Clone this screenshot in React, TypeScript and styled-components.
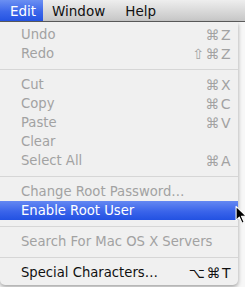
import React from "react";
import styled, { createGlobalStyle } from "styled-components";

const GlobalStyle = createGlobalStyle`
  html, body {
    margin: 0;
    padding: 0;
    background: #f7f7f7;
  }
  body {
    font-family: "DejaVu Sans", "Liberation Sans", sans-serif;
    width: 245px;
    height: 287px;
    overflow: hidden;
  }
`;

const Screen = styled.div`
  position: relative;
  width: 245px;
  height: 287px;
`;

const MenuBar = styled.div`
  display: flex;
  align-items: stretch;
  height: 21px;
  background: linear-gradient(#eeeeee, #d6d6d6 60%, #c6c6c6);
  border-bottom: 1px solid #5c5c5c;
`;

const BarItem = styled.div<{ $active?: boolean }>`
  display: flex;
  align-items: center;
  padding: ${(p) => (p.$active ? "0 0 0 10px" : "0")};
  width: ${(p) => (p.$active ? "43px" : "auto")};
  box-sizing: border-box;
  margin-right: ${(p) => (p.$active ? "9px" : "20px")};
  font-size: 13.5px;
  color: ${(p) => (p.$active ? "#ffffff" : "#111111")};
  background: ${(p) =>
    p.$active ? "linear-gradient(#6b8ff2, #3c67ea 55%, #2453e2)" : "none"};
`;

const Menu = styled.div`
  width: 238px;
  padding: 3px 0 3px;
  background: #f0f0f0;
  border-radius: 0 0 5px 5px;
  box-shadow: 0 2px 4px rgba(0, 0, 0, 0.35);
`;

const Item = styled.div<{ $disabled?: boolean; $selected?: boolean }>`
  display: flex;
  align-items: center;
  justify-content: space-between;
  height: 19px;
  padding: 0 6px 0 21px;
  font-size: 13.2px;
  color: ${(p) => (p.$selected ? "#ffffff" : p.$disabled ? "#a2a2a2" : "#111111")};
  background: ${(p) =>
    p.$selected ? "linear-gradient(#6488f2, #3a64ea 55%, #2251e2)" : "none"};
`;

const Shortcut = styled.span`
  font-size: 14px;
  letter-spacing: 1.5px;
`;

const Separator = styled.div`
  height: 12px;
  display: flex;
  align-items: center;
  &::after {
    content: "";
    flex: 1;
    height: 1px;
    background: #d6d6d6;
  }
`;

const Cursor = styled.svg`
  position: absolute;
  left: 235px;
  top: 205px;
`;

type Entry =
  | { sep: true }
  | { label: string; key?: string; disabled?: boolean; selected?: boolean };

const entries: Entry[] = [
  { label: "Undo", key: "⌘Z", disabled: true },
  { label: "Redo", key: "⇧⌘Z", disabled: true },
  { sep: true },
  { label: "Cut", key: "⌘X", disabled: true },
  { label: "Copy", key: "⌘C", disabled: true },
  { label: "Paste", key: "⌘V", disabled: true },
  { label: "Clear", disabled: true },
  { label: "Select All", key: "⌘A", disabled: true },
  { sep: true },
  { label: "Change Root Password…", disabled: true },
  { label: "Enable Root User", selected: true },
  { sep: true },
  { label: "Search For Mac OS X Servers", disabled: true },
  { sep: true },
  { label: "Special Characters…", key: "⌥⌘T" },
];

export default function App() {
  return (
    <Screen>
      <GlobalStyle />
      <MenuBar>
        <BarItem $active>Edit</BarItem>
        <BarItem>Window</BarItem>
        <BarItem>Help</BarItem>
      </MenuBar>
      <Menu>
        {entries.map((e, i) =>
          "sep" in e ? (
            <Separator key={i} />
          ) : (
            <Item key={i} $disabled={e.disabled} $selected={e.selected}>
              <span>{e.label}</span>
              {e.key && <Shortcut>{e.key}</Shortcut>}
            </Item>
          )
        )}
      </Menu>
      <Cursor width="13" height="20" viewBox="0 0 12 18">
        <path
          d="M1 1 L1 14 L4 11 L6.5 16.5 L8.5 15.6 L6 10.2 L10.5 10.2 Z"
          fill="#000"
          stroke="#fff"
          strokeWidth="1"
          strokeLinejoin="round"
        />
      </Cursor>
    </Screen>
  );
}
